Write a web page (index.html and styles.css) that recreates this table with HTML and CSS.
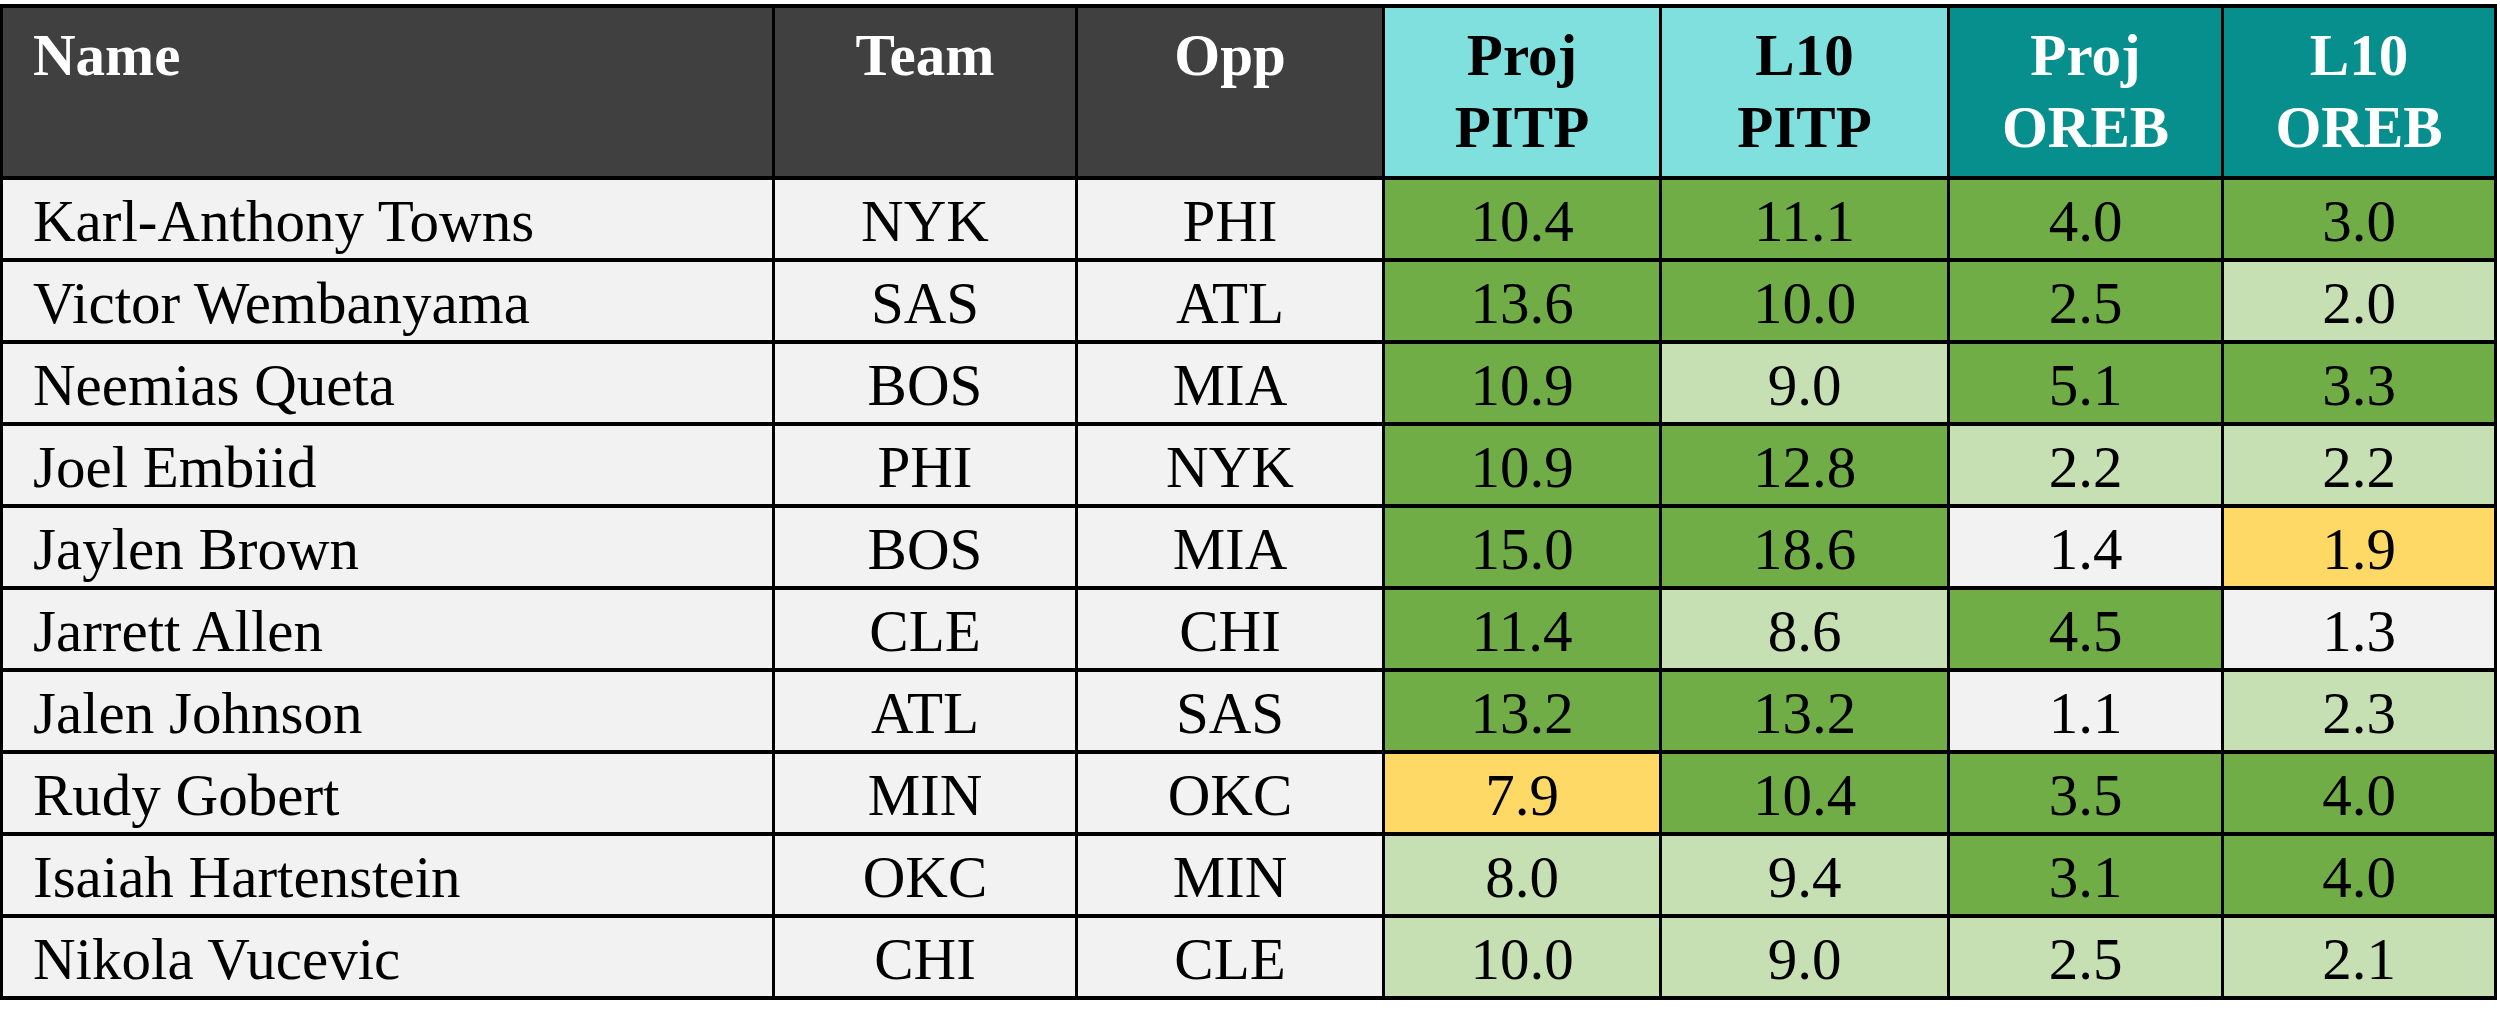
FILE: index.html
```html
<!DOCTYPE html>
<html>
<head>
<meta charset="utf-8">
<link rel="stylesheet" href="styles.css">
</head>
<body>
<table class="stats">
  <colgroup>
    <col class="c-name"><col class="c-team"><col class="c-opp"><col class="c-n1"><col class="c-n2"><col class="c-n3"><col class="c-n4">
  </colgroup>
  <thead>
    <tr>
      <th class="h-dark left">Name</th>
      <th class="h-dark">Team</th>
      <th class="h-dark">Opp</th>
      <th class="h-cyan">Proj<br>PITP</th>
      <th class="h-cyan">L10<br>PITP</th>
      <th class="h-teal">Proj<br>OREB</th>
      <th class="h-teal">L10<br>OREB</th>
    </tr>
  </thead>
  <tbody>
    <tr><td class="name">Karl-Anthony Towns</td><td>NYK</td><td>PHI</td><td class="g">10.4</td><td class="g">11.1</td><td class="g">4.0</td><td class="g">3.0</td></tr>
    <tr><td class="name">Victor Wembanyama</td><td>SAS</td><td>ATL</td><td class="g">13.6</td><td class="g">10.0</td><td class="g">2.5</td><td class="lg">2.0</td></tr>
    <tr><td class="name">Neemias Queta</td><td>BOS</td><td>MIA</td><td class="g">10.9</td><td class="lg">9.0</td><td class="g">5.1</td><td class="g">3.3</td></tr>
    <tr><td class="name">Joel Embiid</td><td>PHI</td><td>NYK</td><td class="g">10.9</td><td class="g">12.8</td><td class="lg">2.2</td><td class="lg">2.2</td></tr>
    <tr><td class="name">Jaylen Brown</td><td>BOS</td><td>MIA</td><td class="g">15.0</td><td class="g">18.6</td><td>1.4</td><td class="y">1.9</td></tr>
    <tr><td class="name">Jarrett Allen</td><td>CLE</td><td>CHI</td><td class="g">11.4</td><td class="lg">8.6</td><td class="g">4.5</td><td>1.3</td></tr>
    <tr><td class="name">Jalen Johnson</td><td>ATL</td><td>SAS</td><td class="g">13.2</td><td class="g">13.2</td><td>1.1</td><td class="lg">2.3</td></tr>
    <tr><td class="name">Rudy Gobert</td><td>MIN</td><td>OKC</td><td class="y">7.9</td><td class="g">10.4</td><td class="g">3.5</td><td class="g">4.0</td></tr>
    <tr><td class="name">Isaiah Hartenstein</td><td>OKC</td><td>MIN</td><td class="lg">8.0</td><td class="lg">9.4</td><td class="g">3.1</td><td class="g">4.0</td></tr>
    <tr><td class="name">Nikola Vucevic</td><td>CHI</td><td>CLE</td><td class="lg">10.0</td><td class="lg">9.0</td><td class="lg">2.5</td><td class="lg">2.1</td></tr>
  </tbody>
</table>
</body>
</html>
```
FILE: styles.css
```css
html, body {
  margin: 0;
  padding: 0;
  background: #ffffff;
}
body {
  padding-top: 4px;
  font-family: "Liberation Serif", "Times New Roman", serif;
}
.stats {
  border-collapse: collapse;
  table-layout: fixed;
  width: 2497px;
  font-size: 59px;
  color: #000;
}
.c-name { width: 772px; }
.c-team { width: 303px; }
.c-opp { width: 307px; }
.c-n1 { width: 277px; }
.c-n2 { width: 288px; }
.c-n3 { width: 274px; }
.c-n4 { width: 273px; }

.stats th, .stats td {
  border: 3px solid #000;
  border-top-width: 4px;
  border-bottom-width: 4px;
  padding: 0;
  text-align: center;
}
.stats th {
  height: 172px;
  vertical-align: top;
  font-weight: bold;
  line-height: 72px;
  padding-top: 11px;
  box-sizing: border-box;
}
.stats th.left { text-align: left; padding-left: 30px; }
.h-dark { background: #404040; color: #ffffff; }
.h-cyan { background: #7FE0DE; color: #000000; }
.h-teal { background: #078F8E; color: #ffffff; }

.stats td {
  height: 82px;
  line-height: 66px;
  vertical-align: middle;
  background: #F2F2F2;
  box-sizing: border-box;
  padding-top: 4px;
}
.stats td.name { text-align: left; padding-left: 30px; }
.stats td.g { background: #70AD47; }
.stats td.lg { background: #C6E0B4; }
.stats td.y { background: #FFD966; }
```
